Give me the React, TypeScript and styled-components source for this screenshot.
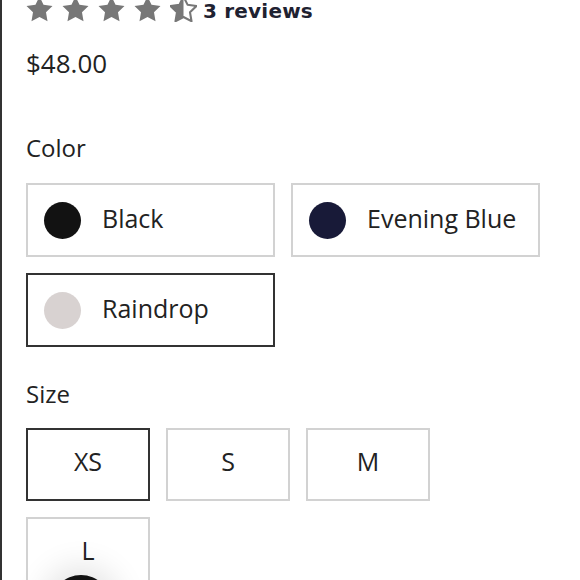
import React from "react";
import styled, { createGlobalStyle, css } from "styled-components";

const Global = createGlobalStyle`
  html, body { margin: 0; padding: 0; background: #fff; }
  body { font-family: "Open Sans", "Noto Sans", sans-serif; color: #222; overflow: hidden; }
`;

const Page = styled.div`
  position: relative;
  height: 580px;
  overflow: hidden;
  border-left: 2px solid #333;
  padding-left: 24px;
  box-sizing: border-box;
`;

const RatingRow = styled.div`
  display: flex;
  align-items: flex-end;
  height: 26px;
  margin-top: -4px;
`;

const Stars = styled.div`
  display: flex;
  gap: 9px;
  margin-right: 6px;
`;

const ReviewCount = styled.span`
  font-family: "DejaVu Sans", sans-serif;
  font-weight: 700;
  font-size: 20px;
  line-height: 20px;
  letter-spacing: 0.2px;
  color: #1f2231;
  margin-bottom: 1px;
`;

const Price = styled.div`
  margin-top: 28px;
  font-size: 26px;
  line-height: 26px;
  color: #222;
`;

const Label = styled.div<{ $top: number }>`
  margin-top: ${(p) => p.$top}px;
  font-size: 24px;
  line-height: 24px;
  color: #222;
`;

const ColorGrid = styled.div`
  display: grid;
  grid-template-columns: repeat(2, 249px);
  grid-auto-rows: 74px;
  gap: 16px;
  margin-top: 23px;
`;

const boxBase = css<{ $selected?: boolean }>`
  box-sizing: border-box;
  border: 2px solid ${(p) => (p.$selected ? "#333" : "#d2d2d2")};
  background: #fff;
`;

const ColorOption = styled.div<{ $selected?: boolean }>`
  ${boxBase};
  display: flex;
  align-items: center;
  padding-left: 16px;
  gap: 21px;
  font-size: 25px;
  color: #222;
`;

const ColorName = styled.span`
  margin-top: -5px;
`;

const Swatch = styled.span<{ $color: string }>`
  width: 37px;
  height: 37px;
  border-radius: 50%;
  background: ${(p) => p.$color};
  flex: none;
`;

const SizeGrid = styled.div`
  display: grid;
  grid-template-columns: repeat(3, 124px);
  grid-auto-rows: 73px;
  gap: 16px;
  margin-top: 22px;
`;

const SizeOption = styled.div<{ $selected?: boolean }>`
  ${boxBase};
  display: flex;
  align-items: center;
  justify-content: center;
  font-size: 25px;
  color: #222;
  padding-bottom: 8px;
`;

const FloatingButton = styled.div`
  position: absolute;
  left: 49px;
  top: 575px;
  width: 60px;
  height: 60px;
  border-radius: 50%;
  background: #111;
  box-shadow: 0 0 30px 10px rgba(0, 0, 0, 0.1);
`;

const STAR = "M12 2l3.09 6.26L22 9.27l-5 4.87 1.18 6.88L12 17.77l-6.18 3.25L7 14.14 2 9.27l6.91-1.01L12 2z";

const Star: React.FC<{ half?: boolean; id: string }> = ({ half, id }) => (
  <svg width="27" height="26" viewBox="1.6 1.6 20.8 20" aria-hidden>
    {half ? (
      <>
        <defs>
          <clipPath id={id}>
            <rect x="0" y="0" width="12" height="24" />
          </clipPath>
        </defs>
        <path d={STAR} fill="#fff" stroke="#777" strokeWidth="1.6" strokeLinejoin="round" />
        <path d={STAR} fill="#777" clipPath={`url(#${id})`} />
      </>
    ) : (
      <path d={STAR} fill="#777" />
    )}
  </svg>
);

const colors = [
  { name: "Black", hex: "#121212" },
  { name: "Evening Blue", hex: "#181a38" },
  { name: "Raindrop", hex: "#d8d2d1", selected: true },
];

const sizes = [
  { name: "XS", selected: true },
  { name: "S" },
  { name: "M" },
  { name: "L" },
];

export default function App() {
  return (
    <>
      <Global />
      <Page>
        <RatingRow>
          <Stars>
            {[0, 1, 2, 3].map((i) => (
              <Star key={i} id={`s${i}`} />
            ))}
            <Star half id="half-star" />
          </Stars>
          <ReviewCount>3 reviews</ReviewCount>
        </RatingRow>
        <Price>$48.00</Price>

        <Label $top={60}>Color</Label>
        <ColorGrid>
          {colors.map((c) => (
            <ColorOption key={c.name} $selected={c.selected}>
              <Swatch $color={c.hex} />
              <ColorName>{c.name}</ColorName>
            </ColorOption>
          ))}
        </ColorGrid>

        <Label $top={35}>Size</Label>
        <SizeGrid>
          {sizes.map((s) => (
            <SizeOption key={s.name} $selected={s.selected}>
              {s.name}
            </SizeOption>
          ))}
        </SizeGrid>
        <FloatingButton />
      </Page>
    </>
  );
}
